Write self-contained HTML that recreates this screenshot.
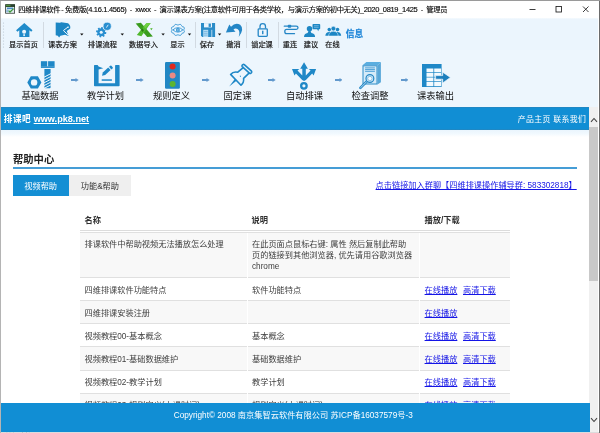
<!DOCTYPE html>
<html lang="zh-CN">
<head>
<meta charset="utf-8">
<title>四维排课软件</title>
<style>
*{box-sizing:border-box;margin:0;padding:0}
html,body{width:600px;height:433px;overflow:hidden;background:#fff}
body{will-change:transform;position:relative;font-family:"Liberation Sans","Noto Sans CJK SC",sans-serif;color:#333}
.abs{position:absolute}
#titlebar{position:absolute;left:0;top:0;width:600px;height:19px;background:#fff}
#title{position:absolute;left:18.2px;top:3.6px;font-size:7.3px;line-height:11px;color:#000;white-space:nowrap;word-spacing:1.6px;letter-spacing:-0.3px;-webkit-text-stroke:.15px #222}
#title i{font-style:normal;font-size:7.5px;letter-spacing:-0.33px}
#title b{font-weight:normal;padding:0 1.6px 0 1.2px}
#toolbar{position:absolute;left:0;top:18.4px;width:597.9px;height:32px;background:linear-gradient(#f5fafe 0,#ebf5fd 1.6px,#ebf5fd 100%)}
#steps{position:absolute;left:0;top:50px;width:597.9px;height:57.5px;background:#edf6fd}
.tl{position:absolute;top:40px;font-size:7.2px;line-height:9px;color:#111;-webkit-text-stroke:.2px #222;white-space:nowrap;transform:translateX(-50%);text-align:center}
.sep{position:absolute;top:21.5px;width:1px;height:26.3px;background:#d2dae2}
.dd{position:absolute;top:33.3px;width:0;height:0;border-left:1.9px solid transparent;border-right:1.9px solid transparent;border-top:2.2px solid #000}
.ico{position:absolute}
.sl{position:absolute;top:89.9px;font-size:9.3px;line-height:12px;color:#111;white-space:nowrap;transform:translateX(-50%)}
.sarrow{position:absolute;top:77.8px;width:7.7px;height:3.9px}
#bluebar{position:absolute;left:0;top:107.2px;width:589.5px;height:23px;background:linear-gradient(#2a83b8 0,#118ed4 1.2px,#118ed4 21.8px,#2a83b8 23px)}
#bluebar .l{position:absolute;left:3.8px;top:7.1px;font-size:9.15px;line-height:11px;font-weight:bold;color:#fff;white-space:nowrap}
#bluebar .l u{text-decoration:underline}
#bluebar .r{position:absolute;right:3.2px;top:7.2px;letter-spacing:.35px;font-size:7.9px;line-height:11px;color:#fff;white-space:nowrap}
#scroll{position:absolute;left:589.4px;top:107.4px;width:8.8px;height:324.2px;background:#f0f0f0}
#thumb{position:absolute;left:0;top:19.5px;width:8.8px;height:154.5px;background:#c9c9c9}
#content{position:absolute;left:0;top:130px;width:589px;height:272px;background:#fff;overflow:hidden}
h1{position:absolute;left:13px;top:152.8px;font-size:10.3px;line-height:13px;font-weight:bold;color:#222;white-space:nowrap}
#hr{position:absolute;left:12.6px;top:167.1px;width:564.9px;height:1.6px;background:#459dd6}
.tab{position:absolute;top:175px;height:20.5px;font-size:8.2px;line-height:20.5px;padding-top:2.3px;text-align:center;white-space:nowrap}
#tab1{left:12.6px;width:56.2px;background:#148fd4;color:#fff}
#tab2{left:68.8px;width:62.2px;background:#efefef;color:#333}
#qq{position:absolute;right:23.3px;top:179.7px;font-size:8.2px;line-height:11px;color:#1414e6;text-decoration:underline;white-space:nowrap}
#thead{position:absolute;left:80px;top:209px;width:430.2px;height:21.7px;border-bottom:1px solid #dcdcdc;font-size:8.25px;line-height:11px;font-weight:bold;color:#303030}
#thead span{position:absolute;top:5.6px;white-space:nowrap}
table{position:absolute;left:80px;top:232.1px;width:430.2px;border-collapse:collapse;font-size:8.2px;line-height:11.2px;color:#404040;table-layout:fixed}
td{padding:6.6px 4.5px 4.3px 4.5px;border-top:1px solid #e0e0e0;vertical-align:top;border-left:1px solid #fff;white-space:nowrap}
tr.s td{background:#f8f8f8}
td a{color:#1414e6;text-decoration:underline;margin-right:3.4px}
td:first-child{border-left:none}
td:last-child{padding-left:4.9px}
tr:first-child td{padding-top:5.5px;padding-bottom:5px}
#footer{position:absolute;left:0;top:402.5px;width:589.5px;height:29.1px;background:#118ed4;color:#fff;font-size:8.22px;line-height:11px;text-align:center;padding-top:7.7px;padding-right:3px;white-space:nowrap}
#status{position:absolute;left:0;top:431.7px;width:600px;height:2px;background:#dcdcdc;overflow:hidden;font-size:7px;line-height:9px;color:#222;padding-left:5px}
#lb{position:absolute;left:0;top:0;width:1px;height:433px;background:#b4b4b4}
#rb{position:absolute;left:598.8px;top:0;width:1.2px;height:433px;background:#6c6c6c}
#tb{position:absolute;left:0;top:0;width:600px;height:.8px;background:#9a9a9a}
</style>
</head>
<body>
<div id="titlebar">
  <svg class="abs" style="left:5px;top:4px" width="10.2" height="9.8" viewBox="0 0 10.2 9.8"><rect x=".2" y=".2" width="9.8" height="9.4" fill="#1d2b22"/><rect x=".9" y=".8" width="8.4" height="1.6" fill="#4f8f3a"/><rect x="5.5" y=".8" width="3.8" height="1.6" fill="#2c3d33"/><rect x=".9" y="3" width="8.4" height="5.9" fill="#dfe8ee"/><rect x="2" y="3.6" width="6" height="1.5" fill="#4a90c8"/><rect x="1.2" y="5.6" width="2.2" height="2.6" fill="#8fb7d8"/><path d="M3.6 6.6 L5 8 L8.6 4.6" stroke="#3f9a3c" stroke-width="1.3" fill="none"/></svg>
  <div id="title">四维排课软件<b>-</b>免费版<i>(4.16.1.4565) - xwxx - </i>演示课表方案<i>(</i>注意软件可用于各类学校，与演示方案的初中无关<i>)_2020_0819_1425 - </i>管理员</div>
  <svg class="abs" style="left:525px;top:4px" width="70" height="12" viewBox="0 0 70 12" fill="none" stroke="#1a1a1a" stroke-width="0.85"><path d="M4.5 5.5h6"/><rect x="31" y="2.5" width="5.5" height="5.5"/><path d="M58 2.5l5.5 5.5M63.5 2.5l-5.5 5.5"/></svg>
</div>

<div id="toolbar"></div>
<div id="steps"></div>

<!-- toolbar grip -->
<svg class="abs" style="left:2px;top:22px" width="3" height="26" viewBox="0 0 3 26"><g fill="#b9c4cf"><circle cx="1.5" cy="1" r=".6"/><circle cx="1.5" cy="4" r=".6"/><circle cx="1.5" cy="7" r=".6"/><circle cx="1.5" cy="10" r=".6"/><circle cx="1.5" cy="13" r=".6"/><circle cx="1.5" cy="16" r=".6"/><circle cx="1.5" cy="19" r=".6"/><circle cx="1.5" cy="22" r=".6"/><circle cx="1.5" cy="25" r=".6"/></g></svg>

<!-- toolbar icons -->
<svg class="ico" style="left:0;top:19px" width="600" height="31" viewBox="0 19 600 31">
<g><path d="M24.3 22.9 L32.5 30.3 L31.2 31.8 L29.4 30.2 V37 H19.3 V30.2 L17.4 31.8 L16.1 30.3 Z" fill="#1f8bca"/><circle cx="24.1" cy="31.8" r="2" fill="#ebf5fd"/><rect x="23.3" y="34.2" width="1.6" height="1.9" fill="#ebf5fd"/></g>
<g><path d="M55.7 22.4 L60 22.8 L61.2 22.2 L68.1 23.3 Q70.9 25.6 70.2 28.6 L66.8 31 L68.5 36.1 L65 34.8 L60.4 35.7 L59.1 37.4 L57.8 35.7 L55.7 35.2 Z" fill="#1c86c4"/><path d="M68.2 26.9 L63.4 30.5 L68 34.9" fill="none" stroke="#ebf5fd" stroke-width="1"/><circle cx="68" cy="27.3" r=".8" fill="#ebf5fd"/></g>
<g><path d="M106.40 32.32 L106.04 34.11 L104.72 33.88 L104.08 34.83 L104.79 35.96 L103.27 36.97 L102.50 35.88 L101.38 36.10 L101.08 37.40 L99.29 37.04 L99.52 35.72 L98.57 35.08 L97.44 35.79 L96.43 34.27 L97.52 33.50 L97.30 32.38 L96.00 32.08 L96.36 30.29 L97.68 30.52 L98.32 29.57 L97.61 28.44 L99.13 27.43 L99.90 28.52 L101.02 28.30 L101.32 27.00 L103.11 27.36 L102.88 28.68 L103.83 29.32 L104.96 28.61 L105.97 30.13 L104.88 30.90 L105.10 32.02 Z" fill="#2a8fd0"/><circle cx="101.2" cy="32.2" r="1.5" fill="#ebf5fd"/><circle cx="107.2" cy="26.3" r="4.1" fill="#2a8fd0" stroke="#ebf5fd" stroke-width=".7"/><path d="M106.4 27.6 L108.2 24.8" stroke="#ebf5fd" stroke-width=".9"/></g>
<g><path d="M135.7 23.4 L140.9 22.8 L152.9 36.4 L147.2 37 Z" fill="#3a9c1e"/><path d="M150.7 23 L146.3 23.3 L136.8 34.9 L141.4 36.2 Z" fill="#4fb82c"/><path d="M146.3 23.3 L143.6 26.6 L145.4 28.6 L150.7 23 Z" fill="#6fd043"/><path d="M142.2 28.2 L144 30.3 L142.6 32 L140.9 30 Z" fill="#2c7a14"/><path d="M150 28.4 L152.6 28 L151.6 30.2 Z" fill="#4fb82c"/></g>
<g fill="none" stroke="#2f93d4"><path d="M183.76 29.90 L183.82 30.23 L183.98 30.57 L184.18 30.95 L184.34 31.36 L184.41 31.76 L184.32 32.14 L184.06 32.46 L183.68 32.71 L183.22 32.90 L182.76 33.05 L182.36 33.20 L182.04 33.39 L181.81 33.66 L181.63 34.00 L181.46 34.39 L181.24 34.78 L180.94 35.10 L180.56 35.31 L180.11 35.39 L179.63 35.34 L179.15 35.20 L178.70 35.03 L178.29 34.89 L177.90 34.84 L177.51 34.89 L177.10 35.03 L176.65 35.20 L176.17 35.34 L175.69 35.39 L175.24 35.31 L174.86 35.10 L174.56 34.78 L174.34 34.39 L174.17 34.00 L173.99 33.66 L173.76 33.39 L173.44 33.20 L173.04 33.05 L172.58 32.90 L172.12 32.71 L171.74 32.46 L171.48 32.14 L171.39 31.76 L171.46 31.36 L171.62 30.95 L171.82 30.57 L171.98 30.23 L172.04 29.90 L171.98 29.57 L171.82 29.23 L171.62 28.85 L171.46 28.44 L171.39 28.04 L171.48 27.66 L171.74 27.34 L172.12 27.09 L172.58 26.90 L173.04 26.75 L173.44 26.60 L173.76 26.41 L173.99 26.14 L174.17 25.80 L174.34 25.41 L174.56 25.02 L174.86 24.70 L175.24 24.49 L175.69 24.41 L176.17 24.46 L176.65 24.60 L177.10 24.77 L177.51 24.91 L177.90 24.96 L178.29 24.91 L178.70 24.77 L179.15 24.60 L179.63 24.46 L180.11 24.41 L180.56 24.49 L180.94 24.70 L181.24 25.02 L181.46 25.41 L181.63 25.80 L181.81 26.14 L182.04 26.41 L182.36 26.60 L182.76 26.75 L183.22 26.90 L183.68 27.09 L184.06 27.34 L184.32 27.66 L184.41 28.04 L184.34 28.44 L184.18 28.85 L183.98 29.23 L183.82 29.57 L183.76 29.90 Z" stroke-width="1"/><path d="M172.9 29.9 Q177.9 25.4 182.9 29.9 Q177.9 34.4 172.9 29.9 Z" stroke-width=".9"/></g><circle cx="177.9" cy="29.9" r="1.9" fill="#2f93d4"/><circle cx="177.9" cy="29.9" r=".7" fill="#cfe6f7"/>
<g><path d="M201 23.1 H215.1 V37 H202.2 L201 35.8 Z" fill="#2a8cc8"/><rect x="204" y="23.1" width="8" height="4.3" fill="#ebf5fd"/><rect x="208.6" y="23.6" width="2.3" height="3.3" fill="#2a8cc8"/><rect x="203.2" y="29.8" width="5" height="7.2" fill="#b5dbf3"/><path d="M203.8 31.5h3.8M203.8 33.3h3.8M203.8 35.1h3.8" stroke="#5aaade" stroke-width=".6"/><rect x="211.5" y="29.8" width=".7" height="7.2" fill="#ebf5fd"/></g>
<path d="M225.9 32.6 L229.3 24.6 L231 26.8 Q235.5 21.8 240.2 24.8 Q244.8 29 238.7 37 Q240.6 31.2 237.5 29 Q235.3 27.9 233.5 29.4 L235.5 31.7 Z" fill="#2486c6"/>
<g fill="none" stroke="#2486c6" stroke-width="1.3"><path d="M260 28.4 V26.4 Q260 23.6 262.75 23.6 Q265.5 23.6 265.5 26.4 V28.4"/><rect x="258.2" y="28.8" width="9.1" height="7.6" rx=".8"/></g><rect x="262.05" y="30.7" width="1.4" height="3.5" fill="#2486c6"/>
<g fill="none" stroke="#2486c6" stroke-width="1.3" stroke-linecap="round"><path d="M284.3 26.2 H287.6"/><path d="M291 26.2 H296.2 Q298 26.2 298 27.8 Q298 29.3 296.2 29.3 H286.6 Q284.8 29.3 284.8 31.4 Q284.8 33.7 286.6 33.7 H294.5"/></g><rect x="287.8" y="24.7" width="3.4" height="3" rx=".8" fill="#2486c6"/>
<g fill="#1c86c4"><circle cx="309.5" cy="28.8" r="2.7"/><path d="M304 37 Q304 33.6 307.6 33.1 L308.5 31 H310.5 L311.4 33.1 Q315.1 33.6 315.1 37 Z"/><path d="M313.3 24 H319.4 Q320.2 24 320.2 24.8 V28.5 Q320.2 29.3 319.4 29.3 H318.9 L318.2 31.3 L317.2 29.3 H313.3 Q312.5 29.3 312.5 28.5 V24.8 Q312.5 24 313.3 24 Z"/></g><path d="M314 25.7h4.7M314 27.3h4.7" stroke="#9fd0ef" stroke-width=".6"/>
<g fill="#1c86c4"><circle cx="329.3" cy="29.6" r="1.8"/><path d="M325.3 35.7 Q325.6 32.2 329.3 32 Q332 32.2 332.5 35.7 Z"/><circle cx="337.5" cy="29.6" r="1.8"/><path d="M334 35.7 Q334.5 32.2 337.5 32 Q340.9 32.2 341.2 35.7 Z"/></g><g fill="#1c86c4" stroke="#ebf5fd" stroke-width=".5"><circle cx="333.4" cy="28.6" r="2.3"/><path d="M328.6 36 Q328.8 31.5 333.4 31.3 Q338 31.5 338.2 36 Z"/></g>
<g fill="#111"><path d="M80.1 33.4 H83.5 L81.8 35.4 Z"/><path d="M120.6 33.4 H124.0 L122.3 35.4 Z"/><path d="M161.4 33.4 H164.8 L163.1 35.4 Z"/><path d="M187.8 33.4 H191.2 L189.5 35.4 Z"/><path d="M217.9 33.4 H221.3 L219.6 35.4 Z"/></g>
</svg>
<div class="abs" style="left:345.8px;top:29.3px;font-size:8.7px;line-height:11px;font-weight:bold;color:#1f86d8;-webkit-text-stroke:.25px #1f86d8;white-space:nowrap">信息</div>

<div class="sep" style="left:43.3px"></div>
<div class="sep" style="left:195.3px"></div>
<div class="sep" style="left:245.9px"></div>
<div class="sep" style="left:278px"></div>


<div class="tl" style="left:23.5px">显示首页</div>
<div class="tl" style="left:62.5px">课表方案</div>
<div class="tl" style="left:102.5px">排课流程</div>
<div class="tl" style="left:143.5px">数据导入</div>
<div class="tl" style="left:177.5px">显示</div>
<div class="tl" style="left:207px">保存</div>
<div class="tl" style="left:233.5px">撤消</div>
<div class="tl" style="left:262px">锁定课</div>
<div class="tl" style="left:290px">重连</div>
<div class="tl" style="left:311px">建议</div>
<div class="tl" style="left:332.5px">在线</div>

<!-- step icons -->
<svg class="ico" style="left:20px;top:55px" width="45" height="37" viewBox="0 0 45 37"><g fill="#1f88c7"><rect x="20.9" y="6.2" width="6.3" height="5.4"/><rect x="28.1" y="6.2" width="6.5" height="5.4"/><rect x="20.9" y="11.4" width="13.7" height="1.5"/><path d="M24.4 14 H30.6 V32.3 Q30.6 33.3 29.6 33.3 H25.4 Q24.4 33.3 24.4 32.3 Z"/></g><g stroke="#edf6fd" stroke-width="1"><path d="M24 22.2l7 -3.6M24 25l7 -3.6M24 27.8l7 -3.6M24 30.6l7 -3.6M24 33.4l7 -3.6"/></g><path d="M7.3 27.4 L10.8 21.2 H17.9 L21.4 27.4 L17.9 33.6 H10.8 Z" fill="#1f88c7"/><circle cx="14.1" cy="27.4" r="3.2" fill="#edf6fd"/></svg>
<svg class="ico" style="left:85px;top:55px" width="45" height="37" viewBox="0 0 45 37"><g fill="#1f88c7"><path d="M9.6 10.1 H12.6 L13.6 11.6 L18.3 13.3 L13.6 14.6 V28.2 H30.1 V10.7 Q30.1 10.1 30.7 10.1 H34 Q34.6 10.1 34.6 10.7 V30.4 Q34.6 31.2 33.8 31.2 H9.8 Q9 31.2 9 30.4 V10.7 Q9 10.1 9.6 10.1 Z"/><rect x="16.7" y="24.3" width="10.2" height="1.5"/><path d="M17 20.8 L17.8 17.4 L23.2 12.5 L25.6 15.1 L20.2 20 Z"/><path d="M24 11.8 L25.3 10.7 Q25.9 10.3 26.4 10.8 L27.7 12.2 Q28.1 12.8 27.6 13.3 L26.4 14.4 Z"/></g></svg>
<svg class="ico" style="left:150px;top:55px" width="45" height="37" viewBox="0 0 45 37"><rect x="15" y="7" width="14.9" height="26.8" rx="1.2" fill="#2187c4"/><circle cx="22.6" cy="11.6" r="3" fill="#e0281e"/><circle cx="22.6" cy="20.5" r="3" fill="#e98a84"/><circle cx="22.6" cy="29.1" r="3" fill="#5cb531"/></svg>
<svg class="ico" style="left:218px;top:55px" width="45" height="37" viewBox="0 0 45 37"><g fill="none" stroke="#1f88c7" stroke-width="1.6" stroke-linejoin="round" stroke-linecap="round"><path d="M26.3 9.6 L33.5 16.2 Q34.1 16.9 33.5 17.6 L32.8 18.3 Q32.1 18.8 31.4 18.2 L24.2 11.6 Q23.6 10.9 24.2 10.2 L24.9 9.6 Q25.6 9.1 26.3 9.6 Z"/><path d="M25.2 12.6 L19.8 17.2 Q15.2 16.2 12.6 19.4 L23 30.2 Q26.2 27.6 25.6 23.4 L31 18.2"/></g><path d="M16.8 24.1 L18.5 25.8 L11.2 31.6 Z" fill="#1f88c7"/><path d="M22.3 20.6 L22.5 22" stroke="#1f88c7" stroke-width=".8"/></svg>
<svg class="ico" style="left:282px;top:55px" width="45" height="37" viewBox="0 0 45 37"><g fill="#1f88c7"><path d="M22.05 7.3 L25.9 13.8 H23.8 V20.5 L28.6 15.6 L26.7 14.1 H34.1 L31.6 20.6 L30.2 18.4 L23.9 25 L22.05 26 L20.2 25 L13.9 18.4 L12.5 20.6 L10 14.1 H17.4 L15.5 15.6 L20.3 20.5 V13.8 H18.2 Z"/></g><circle cx="21.9" cy="30.8" r="2.75" fill="none" stroke="#1f88c7" stroke-width="2.3"/></svg>
<svg class="ico" style="left:348px;top:55px" width="45" height="37" viewBox="0 0 45 37"><path d="M14.5 10.3 L18.4 7 H32.9 L29.5 10.3 Z" fill="#5baee0"/><path d="M29.5 10.3 L32.9 7 V27.3 L29.5 29.5 Z" fill="#58a7d8"/><rect x="15" y="10.8" width="14" height="18.2" fill="#d6ebf8" stroke="#2a8cc8" stroke-width="1"/><g stroke="#4a9fd6" stroke-width="1"><path d="M17.1 12.9h9.8M17.1 14.6h9.8M17.1 16.3h9.8"/></g><path d="M18.6 26.7 L12.4 32.9" stroke="#2386c4" stroke-width="2.6" stroke-linecap="round"/><path d="M18.6 26.7 L12.6 32.7" stroke="#bfe0f5" stroke-width=".9" stroke-linecap="round"/><circle cx="21.9" cy="23.5" r="3.9" fill="#d6ebf8" stroke="#2386c4" stroke-width="1.2"/><circle cx="21.9" cy="23.5" r="2.2" fill="#f7fbfe" stroke="#4a9fd6" stroke-width=".6"/></svg>
<svg class="ico" style="left:413px;top:55px" width="45" height="37" viewBox="0 0 45 37"><rect x="9" y="9" width="19.6" height="23" fill="#1f88c7"/><g fill="#f4fafe"><rect x="13.5" y="13.5" width="6.9" height="3.8"/><rect x="21.2" y="13.5" width="6.9" height="3.8"/><rect x="13.5" y="18" width="6.9" height="3.8"/><rect x="21.2" y="18" width="6.9" height="3.8"/><rect x="13.5" y="22.5" width="6.9" height="3.8"/><rect x="21.2" y="22.5" width="6.9" height="3.8"/><rect x="13.5" y="27" width="6.9" height="4.2"/><rect x="21.2" y="27" width="6.9" height="4.2"/></g><path d="M22.6 20.6 H29.7 V17.2 L37.4 22.4 L29.7 28 V24.2 H22.6 Z" fill="#1c7fbd" stroke="#edf6fd" stroke-width=".7"/></svg>

<!-- step arrows -->
<svg class="sarrow" style="left:71.2px" viewBox="0 0 8 5" preserveAspectRatio="none"><path d="M0 1.25 H4.7 V0 L8 2.5 L4.7 5 V3.75 H0 Z" fill="#6299cd"/></svg>
<svg class="sarrow" style="left:136.4px" viewBox="0 0 8 5" preserveAspectRatio="none"><path d="M0 1.25 H4.7 V0 L8 2.5 L4.7 5 V3.75 H0 Z" fill="#6299cd"/></svg>
<svg class="sarrow" style="left:201.9px" viewBox="0 0 8 5" preserveAspectRatio="none"><path d="M0 1.25 H4.7 V0 L8 2.5 L4.7 5 V3.75 H0 Z" fill="#6299cd"/></svg>
<svg class="sarrow" style="left:268.2px" viewBox="0 0 8 5" preserveAspectRatio="none"><path d="M0 1.25 H4.7 V0 L8 2.5 L4.7 5 V3.75 H0 Z" fill="#6299cd"/></svg>
<svg class="sarrow" style="left:334.6px" viewBox="0 0 8 5" preserveAspectRatio="none"><path d="M0 1.25 H4.7 V0 L8 2.5 L4.7 5 V3.75 H0 Z" fill="#6299cd"/></svg>
<svg class="sarrow" style="left:400.5px" viewBox="0 0 8 5" preserveAspectRatio="none"><path d="M0 1.25 H4.7 V0 L8 2.5 L4.7 5 V3.75 H0 Z" fill="#6299cd"/></svg>

<div class="sl" style="left:40px">基础数据</div>
<div class="sl" style="left:105.5px">教学计划</div>
<div class="sl" style="left:171.5px">规则定义</div>
<div class="sl" style="left:237.5px">固定课</div>
<div class="sl" style="left:304.5px">自动排课</div>
<div class="sl" style="left:370px">检查调整</div>
<div class="sl" style="left:435.5px">课表输出</div>

<div id="content"><div style="position:absolute;left:0;top:0;width:589.5px;height:7px;background:linear-gradient(#eaf5fd,#f2f9fe 55%,#fff)"></div>
</div>
<h1>帮助中心</h1>
<div id="hr"></div>
<div class="tab" id="tab1">视频帮助</div>
<div class="tab" id="tab2">功能&amp;帮助</div>
<div id="qq">点击链接加入群聊【四维排课操作辅导群: 583302818】</div>

<div id="thead"><span style="left:4.4px">名称</span><span style="left:171.5px">说明</span><span style="left:344.5px">播放/下载</span></div>
<table>
<colgroup><col style="width:167px"><col style="width:172.2px"><col style="width:91px"></colgroup>
<tr class="s"><td>排课软件中帮助视频无法播放怎么处理</td><td>在此页面点鼠标右键: 属性 然后复制此帮助<br>页的链接到其他浏览器, 优先请用谷歌浏览器<br>chrome</td><td></td></tr>
<tr><td>四维排课软件功能特点</td><td>软件功能特点</td><td><a>在线播放</a> <a>高清下载</a></td></tr>
<tr class="s"><td>四维排课安装注册</td><td></td><td><a>在线播放</a></td></tr>
<tr><td>视频教程00-基本概念</td><td>基本概念</td><td><a>在线播放</a> <a>高清下载</a></td></tr>
<tr class="s"><td>视频教程01-基础数据维护</td><td>基础数据维护</td><td><a>在线播放</a> <a>高清下载</a></td></tr>
<tr><td>视频教程02-教学计划</td><td>教学计划</td><td><a>在线播放</a> <a>高清下载</a></td></tr>
<tr class="s"><td>视频教程03-规则定义(上课时间)</td><td>规则定义(上课时间)</td><td><a>在线播放</a> <a>高清下载</a></td></tr>
</table>

<div id="bluebar"><div class="l"><span style="font-size:8.6px;letter-spacing:.5px">排课吧</span> <u>www.pk8.net</u></div><div class="r">产品主页 联系我们</div></div>
<div id="scroll">
  <svg class="abs" style="left:0.6px;top:9.6px" width="8" height="6" viewBox="0 0 8 6"><path d="M1 4.8 L4 1.5 L7 4.8" fill="none" stroke="#444" stroke-width="1.1"/></svg>
  <div id="thumb"></div>
  <svg class="abs" style="left:0.6px;top:309.3px" width="8" height="6" viewBox="0 0 8 6"><path d="M1 1.2 L4 4.5 L7 1.2" fill="none" stroke="#444" stroke-width="1.1"/></svg>
</div>
<div id="footer">Copyright© 2008 南京集智云软件有限公司 苏ICP备16037579号-3</div>
<div id="status">就绪 排课吧</div>
<div id="lb"></div><div id="rb"></div><div id="tb"></div>
</body>
</html>
